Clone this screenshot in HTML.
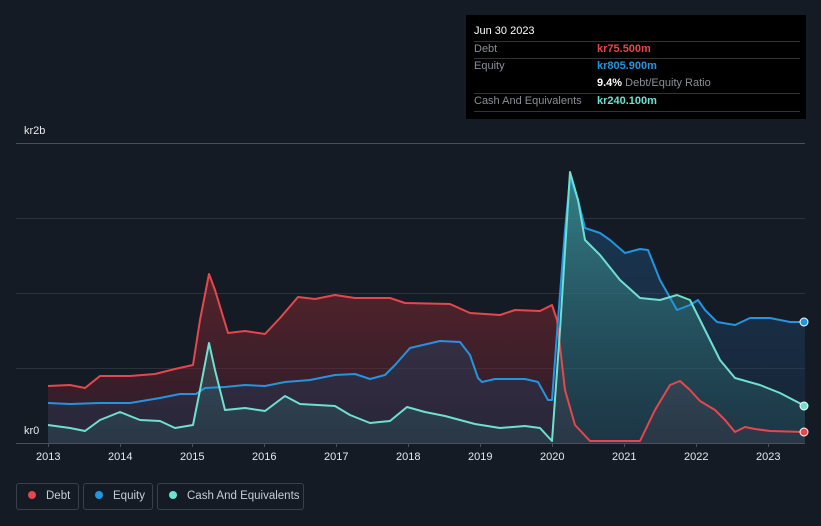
<!DOCTYPE html><html><head><meta charset="utf-8"><style>
body{margin:0;background:#151b25;width:821px;height:526px;overflow:hidden;font-family:"Liberation Sans",sans-serif;position:relative}
.tt{position:absolute;left:466px;top:15px;width:340px;height:104px;background:#000;color:#fff;font-size:11px}
.tt .r{position:absolute;left:8px;right:6px;border-bottom:1px solid #333}
.g{color:#8a8f96}
.leg{position:absolute;top:483px;height:27px;border:1px solid #3a404a;border-radius:3px;color:#c8ccd2;font-size:11.5px;line-height:25px;box-sizing:border-box;white-space:nowrap;overflow:hidden}
.leg i{display:inline-block;width:8px;height:8px;border-radius:50%;margin:0 10px 0 11px;vertical-align:0px}
.ax{position:absolute;top:451px;color:#e6e8eb;font-size:11px}
</style></head><body>
<svg width="821" height="526" style="position:absolute;left:0;top:0">
<defs>
<linearGradient id="gd" x1="0" y1="0" x2="0" y2="1"><stop offset="0" stop-color="#8a2a30" stop-opacity=".55"/><stop offset="1" stop-color="#5a2030" stop-opacity=".35"/></linearGradient>
<linearGradient id="ge" x1="0" y1="0" x2="0" y2="1"><stop offset="0" stop-color="#1e5a8c" stop-opacity=".5"/><stop offset="1" stop-color="#1e3a5c" stop-opacity=".3"/></linearGradient>
<linearGradient id="gc" x1="0" y1="0" x2="0" y2="1"><stop offset="0" stop-color="#4fc8b8" stop-opacity=".5"/><stop offset="1" stop-color="#2a6a70" stop-opacity=".25"/></linearGradient>
</defs>
<g stroke="#2c323c" stroke-width="1"><line x1="16" y1="143.5" x2="805" y2="143.5" stroke="#4a505a"/><line x1="16" y1="218.5" x2="805" y2="218.5"/><line x1="16" y1="293.5" x2="805" y2="293.5"/><line x1="16" y1="368.5" x2="805" y2="368.5"/></g>
<path fill="url(#gd)" d="M48,386 L70,385 85,388 100,376 130,376 155,374 175,369 193,365 200,320 209,274 215,290 228,333 245,331 265,334 280,318 298,297 315,299 335,295 355,298 390,298 405,303 450,304 470,313 500,315 515,310 540,311 552,305 557,320 565,390 575,425 590,441 640,441 655,410 670,385 680,381 690,390 700,401 715,410 725,420 735,432 745,427 755,429 770,431 805,432 L805,443 48,443Z"/>
<path fill="url(#ge)" d="M48,403 L70,404 100,403 130,403 160,398 180,394 196,394 205,388 225,387 245,385 265,386 285,382 310,380 335,375 355,374 370,379 385,375 395,365 410,348 440,341 460,342 470,355 478,378 482,382 495,379 525,379 538,382 548,400 552,400 558,320 565,230 570,178 578,200 585,228 600,233 610,240 625,253 640,249 648,250 660,280 677,310 690,305 698,300 705,310 717,322 735,325 750,318 770,318 790,322 805,322 L805,443 48,443Z"/>
<path fill="url(#gc)" d="M48,425 L70,428 85,431 100,420 120,412 140,420 160,421 175,428 193,425 200,390 209,343 215,370 225,410 245,408 265,411 285,396 300,404 335,406 350,415 370,423 390,421 407,407 425,412 445,416 475,424 500,428 525,426 540,428 552,441 560,330 570,172 578,200 585,240 600,255 620,280 640,298 660,300 677,295 690,300 700,320 720,360 735,378 760,385 780,393 805,406 L805,443 48,443Z"/>
<g fill="none" stroke-width="2" stroke-linejoin="round">
<path stroke="#e5474c" d="M48,386 L70,385 85,388 100,376 130,376 155,374 175,369 193,365 200,320 209,274 215,290 228,333 245,331 265,334 280,318 298,297 315,299 335,295 355,298 390,298 405,303 450,304 470,313 500,315 515,310 540,311 552,305 557,320 565,390 575,425 590,441 640,441 655,410 670,385 680,381 690,390 700,401 715,410 725,420 735,432 745,427 755,429 770,431 805,432"/>
<path stroke="#2394df" d="M48,403 L70,404 100,403 130,403 160,398 180,394 196,394 205,388 225,387 245,385 265,386 285,382 310,380 335,375 355,374 370,379 385,375 395,365 410,348 440,341 460,342 470,355 478,378 482,382 495,379 525,379 538,382 548,400 552,400 558,320 565,230 570,178 578,200 585,228 600,233 610,240 625,253 640,249 648,250 660,280 677,310 690,305 698,300 705,310 717,322 735,325 750,318 770,318 790,322 805,322"/>
<path stroke="#6ee0d0" d="M48,425 L70,428 85,431 100,420 120,412 140,420 160,421 175,428 193,425 200,390 209,343 215,370 225,410 245,408 265,411 285,396 300,404 335,406 350,415 370,423 390,421 407,407 425,412 445,416 475,424 500,428 525,426 540,428 552,441 560,330 570,172 578,200 585,240 600,255 620,280 640,298 660,300 677,295 690,300 700,320 720,360 735,378 760,385 780,393 805,406"/>
</g>
<line x1="16" y1="443.5" x2="805" y2="443.5" stroke="#4a505a"/>
<g stroke="#4a505a"><line x1="48.5" y1="443" x2="48.5" y2="447"/><line x1="120.5" y1="443" x2="120.5" y2="447"/><line x1="192.5" y1="443" x2="192.5" y2="447"/><line x1="264.5" y1="443" x2="264.5" y2="447"/><line x1="336.5" y1="443" x2="336.5" y2="447"/><line x1="408.5" y1="443" x2="408.5" y2="447"/><line x1="480.5" y1="443" x2="480.5" y2="447"/><line x1="552.5" y1="443" x2="552.5" y2="447"/><line x1="624.5" y1="443" x2="624.5" y2="447"/><line x1="696.5" y1="443" x2="696.5" y2="447"/><line x1="768.5" y1="443" x2="768.5" y2="447"/></g>
<circle cx="804" cy="432" r="4" fill="#e5474c" stroke="#fff" stroke-width="1"/>
<circle cx="804" cy="322" r="4" fill="#2394df" stroke="#fff" stroke-width="1"/>
<circle cx="804" cy="406" r="4" fill="#6ee0d0" stroke="#fff" stroke-width="1"/>
</svg>
<div style="position:absolute;left:24px;top:125px;color:#e6e8eb;font-size:11px">kr2b</div>
<div style="position:absolute;left:24px;top:425px;color:#e6e8eb;font-size:11px">kr0</div>
<div class="ax" style="left:36px">2013</div><div class="ax" style="left:108px">2014</div><div class="ax" style="left:180px">2015</div><div class="ax" style="left:252px">2016</div><div class="ax" style="left:324px">2017</div><div class="ax" style="left:396px">2018</div><div class="ax" style="left:468px">2019</div><div class="ax" style="left:540px">2020</div><div class="ax" style="left:612px">2021</div><div class="ax" style="left:684px">2022</div><div class="ax" style="left:756px">2023</div>
<div class="tt">
<div style="position:absolute;left:8px;top:10px">Jun 30 2023</div>
<div class="r" style="top:26px;height:0"></div>
<div class="g" style="position:absolute;left:8px;top:28px">Debt</div><div style="position:absolute;left:131px;top:28px;color:#e5474c;font-weight:bold">kr75.500m</div>
<div class="r" style="top:43px;height:0"></div>
<div class="g" style="position:absolute;left:8px;top:45px">Equity</div><div style="position:absolute;left:131px;top:45px;color:#2394df;font-weight:bold">kr805.900m</div>
<div style="position:absolute;left:131px;top:62px"><b>9.4%</b> <span class="g">Debt/Equity Ratio</span></div>
<div class="r" style="top:78px;height:0"></div>
<div class="g" style="position:absolute;left:8px;top:80px">Cash And Equivalents</div><div style="position:absolute;left:131px;top:80px;color:#6ee0d0;font-weight:bold">kr240.100m</div>
<div class="r" style="top:96px;height:0"></div>
</div>
<div class="leg" style="left:16px;width:63px"><i style="background:#e5474c"></i>Debt</div>
<div class="leg" style="left:83px;width:70px"><i style="background:#2394df"></i>Equity</div>
<div class="leg" style="left:157px;width:147px"><i style="background:#6ee0d0"></i>Cash And Equivalents</div>
</body></html>
